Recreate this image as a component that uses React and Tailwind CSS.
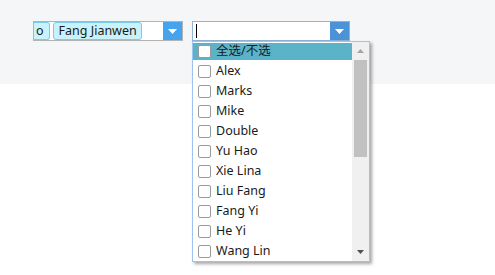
import React from 'react';

const names = [
  'Alex',
  'Marks',
  'Mike',
  'Double',
  'Yu Hao',
  'Xie Lina',
  'Liu Fang',
  'Fang Yi',
  'He Yi',
  'Wang Lin',
];

function Caret({ className }) {
  return (
    <svg width="9" height="5" viewBox="0 0 9 5" className={className}>
      <path d="M0 0 L9 0 L4.5 5 Z" fill="#fff" />
    </svg>
  );
}

function Box() {
  return (
    <span className="block w-[13px] h-[13px] shrink-0 rounded-[2px] border border-[#9a9a9a] bg-white" />
  );
}

export default function App() {
  return (
    <div
      className="relative w-[495px] h-[275px] bg-white text-[12.5px] text-[#1a1a1a]"
      style={{ fontFamily: '"Noto Sans", "Noto Sans CJK SC", sans-serif' }}
    >
      <div className="h-[84px] bg-[#f5f6f8] pt-[21px] pl-[33px] flex gap-[9px] items-start">
        {/* first select with tags */}
        <div className="w-[150px] h-[20px] border border-[#b3b3b3] bg-white flex">
          <div className="flex-1 flex items-center gap-[3px] overflow-hidden">
            <span className="h-[18px] pl-[2px] pr-[5px] flex items-center bg-[#c8f2fc] border border-l-0 border-[#7ccbe9] rounded-r-[3px] leading-none">
              o
            </span>
            <span className="h-[18px] pl-[5px] pr-[4px] flex items-center bg-[#c8f2fc] border border-[#7ccbe9] rounded-[3px] leading-none whitespace-nowrap">
              Fang Jianwen
            </span>
          </div>
          <div className="w-[19px] h-full bg-[#47a4ec] flex items-center justify-center">
            <Caret />
          </div>
        </div>

        {/* second select, focused */}
        <div className="w-[158px] h-[20px] border border-[#8fb4dc] bg-white flex">
          <div className="flex-1 flex items-center pl-[3px]">
            <span className="block w-px h-[14px] bg-black" />
          </div>
          <div className="w-[19px] h-full bg-[#4b92d6] flex items-center justify-center">
            <Caret />
          </div>
        </div>
      </div>

      {/* dropdown menu */}
      <div className="absolute left-[192px] top-[41px] w-[178px] h-[221px] border border-[#9cc4ee] bg-white flex shadow-[2px_2px_3px_rgba(0,0,0,0.35)]">
        <div className="flex-1 pt-px">
          <div className="h-[17px] mb-[1px] bg-[#5ab3c8] flex items-center gap-[5px] pl-[5px]">
            <Box />
            <span className="leading-none">全选/不选</span>
          </div>
          {names.map((n) => (
            <div key={n} className="h-[20px] flex items-center gap-[5px] pl-[5px]">
              <Box />
              <span className="leading-none">{n}</span>
            </div>
          ))}
        </div>
        <div className="w-[17px] h-full bg-[#f0f0f0] flex flex-col items-center">
          <div className="h-[18px] flex items-center justify-center">
            <svg width="7" height="4" viewBox="0 0 7 4">
              <path d="M0 4 L7 4 L3.5 0 Z" fill="#a3a3a3" />
            </svg>
          </div>
          <div className="w-[13px] h-[97px] bg-[#c1c1c1]" />
          <div className="flex-1" />
          <div className="h-[18px] flex items-center justify-center">
            <svg width="7" height="4" viewBox="0 0 7 4">
              <path d="M0 0 L7 0 L3.5 4 Z" fill="#505050" />
            </svg>
          </div>
        </div>
      </div>
    </div>
  );
}
